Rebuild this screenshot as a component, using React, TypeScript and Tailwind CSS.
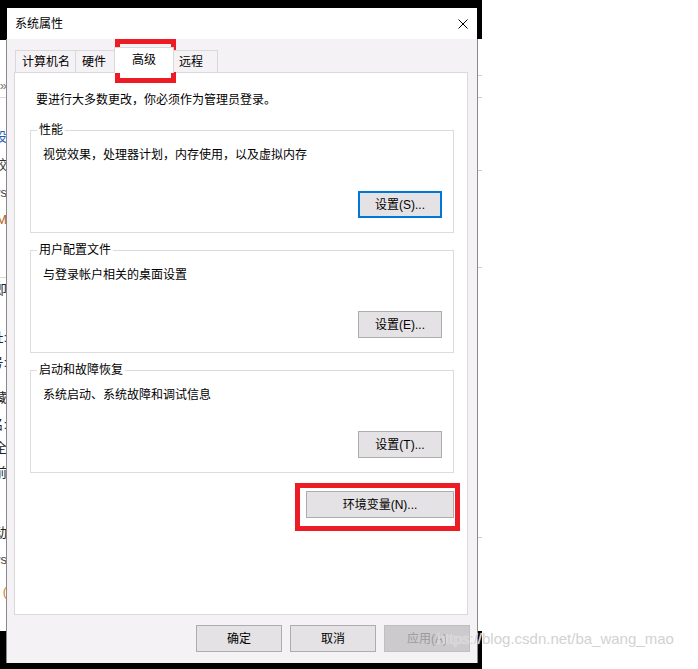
import React from 'react';

// bits of the window that sits behind the dialog, only a 6px strip shows on the left
const leftBits = [
  { top: 38, text: '»', cls: 'text-[#777]' },
  { top: 89, text: '设', cls: 'text-[#1e5bb8]' },
  { top: 117, text: '较', cls: 'text-[#333]' },
  { top: 145, text: 'ws', cls: 'text-[#444]' },
  { top: 172, text: 'M', cls: 'text-[#b0601a]' },
  { top: 242, text: '即', cls: 'text-[#222]' },
  { top: 290, text: '址:', cls: 'text-[#222]' },
  { top: 315, text: '号:', cls: 'text-[#222]' },
  { top: 350, text: '藏', cls: 'text-[#222]' },
  { top: 377, text: '名:', cls: 'text-[#222]' },
  { top: 400, text: '全', cls: 'text-[#222]' },
  { top: 425, text: '前', cls: 'text-[#222]' },
  { top: 485, text: '动', cls: 'text-[#222]' },
  { top: 512, text: 'ws', cls: 'text-[#444]' },
  { top: 544, text: '(', cls: 'text-[#d08020]' },
];

const rightTicks = [36, 58, 131, 228, 498];

function Button({ label, focused, disabled, className = '' }: { label: string; focused?: boolean; disabled?: boolean; className?: string }) {
  const tone = focused
    ? 'border-2 border-[#0078d7] bg-[#e5e2e5] text-black'
    : disabled
      ? 'border border-[#bfbfbf] bg-[#cdcacd] text-[#9a9a9a]'
      : 'border border-[#adadad] bg-[#e5e2e5] text-black';
  return <div className={`flex h-[27px] items-center justify-center ${tone} ${className}`}>{label}</div>;
}

function Group({ title, desc, button, focused, className = '' }: { title: string; desc: string; button: string; focused?: boolean; className?: string }) {
  return (
    <div className={`relative ml-[15px] w-[424px] border border-[#dcdcdc] pb-[14px] pt-[16px] ${className}`}>
      <span className="absolute left-[6px] top-[-9px] bg-white px-[2px]">{title}</span>
      <p className="pl-[12px]">{desc}</p>
      <div className="mt-[28px] flex justify-end pr-[11px]">
        <Button label={button} focused={focused} className="w-[84px]" />
      </div>
    </div>
  );
}

function Tab({ label, className = '' }: { label: string; className?: string }) {
  return (
    <div className={`mb-px flex h-[22px] items-center border border-b-0 border-[#d9d9d9] bg-[#f5f2f5] pl-[6px] ${className}`}>
      {label}
    </div>
  );
}

export default function App() {
  return (
    <div className="relative h-[669px] w-[698px] overflow-hidden bg-white font-['Liberation_Sans','Noto_Sans_CJK_SC',sans-serif] text-[12px] leading-[16px] text-black">
      {/* black capture frame */}
      <div className="absolute left-0 top-0 h-[669px] w-[482px] bg-black" />

      {/* window behind, left strip */}
      <div className="absolute left-0 top-[40px] h-[591px] w-[6px] overflow-hidden bg-white">
        <div className="absolute left-0 top-[57px] h-px w-[6px] bg-[#d9d9d9]" />
        <div className="absolute left-0 top-[237px] h-px w-[6px] bg-[#d9d9d9]" />
        {leftBits.map((b) => (
          <span key={b.top} className={`absolute right-[-1px] whitespace-nowrap text-[13px] ${b.cls}`} style={{ top: b.top }}>
            {b.text}
          </span>
        ))}
      </div>

      {/* window behind, right strip */}
      <div className="absolute left-[478px] top-[39px] h-[592px] w-[4px] bg-white">
        {rightTicks.map((t) => (
          <div key={t} className="absolute left-0 h-px w-[4px] bg-[#cfcfcf]" style={{ top: t }} />
        ))}
      </div>

      {/* dialog */}
      <div className="absolute left-[6px] top-[8px] w-[472px]">
        <div className="mx-px flex h-[31px] items-center justify-between bg-white pl-[8px] pr-[9px]">
          <span>系统属性</span>
          <svg width="10" height="10" viewBox="0 0 10 10" className="mt-[1px]">
            <path d="M0.5 0.5 L9.5 9.5 M9.5 0.5 L0.5 9.5" stroke="#000" strokeWidth="1" fill="none" />
          </svg>
        </div>

        <div className="flex h-[624px] flex-col border-x border-[#8a8a8a] bg-[#f5f2f5] pt-[8px]">
          {/* tabs */}
          <div className="relative z-10 -mb-px ml-[8px] flex h-[26px] items-end">
            <Tab label="计算机名" className="w-[61px]" />
            <Tab label="硬件" className="-ml-px w-[42px]" />
            <div className="relative z-10 -ml-[3px] flex h-[26px] w-[60px] items-center justify-center border border-b-0 border-[#d9d9d9] bg-white pb-[1px]">
              高级
            </div>
            <Tab label="远程" className="-ml-[2px] w-[46px]" />
          </div>

          {/* tab page */}
          <div className="ml-[7px] h-[543px] w-[454px] border border-[#d9d9d9] bg-white pt-[19px]">
            <p className="pl-[21px]">要进行大多数更改，你必须作为管理员登录。</p>
            <Group className="mt-[22px]" title="性能" desc="视觉效果，处理器计划，内存使用，以及虚拟内存" button="设置(S)..." focused />
            <Group className="mt-[17px]" title="用户配置文件" desc="与登录帐户相关的桌面设置" button="设置(E)..." />
            <Group className="mt-[17px]" title="启动和故障恢复" desc="系统启动、系统故障和调试信息" button="设置(T)..." />
            <div className="ml-[15px] mt-[18px] flex w-[424px] justify-end">
              <Button label="环境变量(N)..." className="w-[148px]" />
            </div>
          </div>

          {/* dialog buttons */}
          <div className="mt-[10px] flex justify-end gap-[8px] pr-[7px]">
            <Button label="确定" className="w-[86px]" />
            <Button label="取消" className="w-[86px]" />
            <Button label="应用(A)" disabled className="w-[86px]" />
          </div>
        </div>
      </div>

      {/* red highlight marks */}
      <div className="absolute left-[115px] top-[39px] h-[44px] w-[61px] border-[5px] border-[#ed1c24]" />
      <div className="absolute left-[295px] top-[483px] h-[48px] w-[165px] border-[5px] border-[#ed1c24]" />

      {/* watermark */}
      <span className="absolute left-[437px] top-[631px] whitespace-nowrap font-['Liberation_Sans',sans-serif] text-[15px] leading-[16px] text-[#d2d2d2] [text-shadow:0_0_1px_#ffffff]">
        https://blog.csdn.net/ba_wang_mao
      </span>
    </div>
  );
}
